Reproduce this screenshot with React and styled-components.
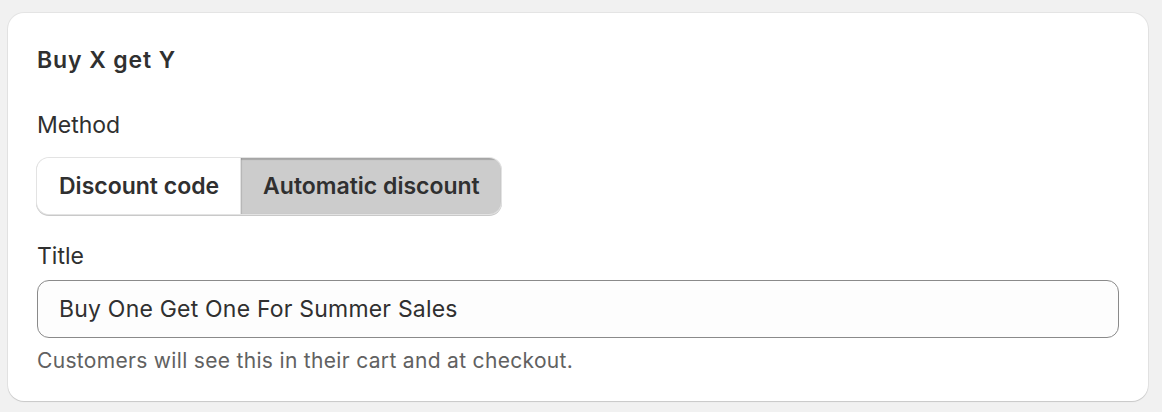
import React, { useState } from "react";
import styled, { createGlobalStyle } from "styled-components";

const GlobalStyle = createGlobalStyle`
  body {
    margin: 0;
    background: #f1f1f1;
    font-family: Inter, "Noto Sans", sans-serif;
    color: #303030;
  }
`;

const Page = styled.div`
  padding: 13px 14px 11px 8px;
`;

const Card = styled.section`
  background: #ffffff;
  border-radius: 16px;
  box-shadow: 0 1px 1px rgba(0, 0, 0, 0.12), 0 0 0 1px rgba(0, 0, 0, 0.05);
  padding: 32px 29px 26px 29px;
  display: flex;
  flex-direction: column;
`;

const Heading = styled.h2`
  margin: 0;
  font-size: 23px;
  line-height: 30px;
  font-weight: 600;
  letter-spacing: 0.9px;
  color: #303030;
`;

const Label = styled.div`
  font-size: 23px;
  line-height: 30px;
  color: #303030;
  margin-top: ${(p) => p.$top}px;
`;

const Segmented = styled.div`
  display: flex;
  align-self: flex-start;
  margin-top: 18px;
  border-radius: 12px;
  overflow: hidden;
  box-shadow: 0 0 0 1px #e3e3e3, 0 1px 0 1px #c9c9c9;
`;

const Segment = styled.button`
  font-family: inherit;
  font-size: 23px;
  font-weight: 600;
  color: #303030;
  height: 56px;
  padding: 0 21px 0 22px;
  border: none;
  cursor: pointer;
  background: ${(p) => (p.$active ? "#cccccc" : "#ffffff")};
  box-shadow: ${(p) =>
    p.$active
      ? "inset 0 2px 1px rgba(26, 26, 26, 0.2), inset 1px 0 1px rgba(26, 26, 26, 0.1)"
      : "none"};
  border-right: ${(p) => (p.$first ? "1px solid #e3e3e3" : "none")};
`;

const Input = styled.input`
  margin-top: 9px;
  height: 58px;
  box-sizing: border-box;
  width: 100%;
  border: 1px solid #8a8a8a;
  border-radius: 12px;
  background: #fdfdfd;
  padding: 0 21px;
  font-family: inherit;
  font-size: 23px;
  letter-spacing: 0.2px;
  color: #303030;
  outline: none;
`;

const Help = styled.div`
  margin-top: 9px;
  font-size: 21px;
  line-height: 28px;
  letter-spacing: 0.32px;
  color: #616161;
`;

export default function App() {
  const [method, setMethod] = useState("automatic");
  const [title, setTitle] = useState("Buy One Get One For Summer Sales");

  return (
    <Page>
      <GlobalStyle />
      <Card>
        <Heading>Buy X get Y</Heading>
        <Label $top={35}>Method</Label>
        <Segmented>
          <Segment
            $first
            $active={method === "code"}
            onClick={() => setMethod("code")}
          >
            Discount code
          </Segment>
          <Segment
            $active={method === "automatic"}
            onClick={() => setMethod("automatic")}
          >
            Automatic discount
          </Segment>
        </Segmented>
        <Label $top={27}>Title</Label>
        <Input value={title} onChange={(e) => setTitle(e.target.value)} />
        <Help>Customers will see this in their cart and at checkout.</Help>
      </Card>
    </Page>
  );
}
